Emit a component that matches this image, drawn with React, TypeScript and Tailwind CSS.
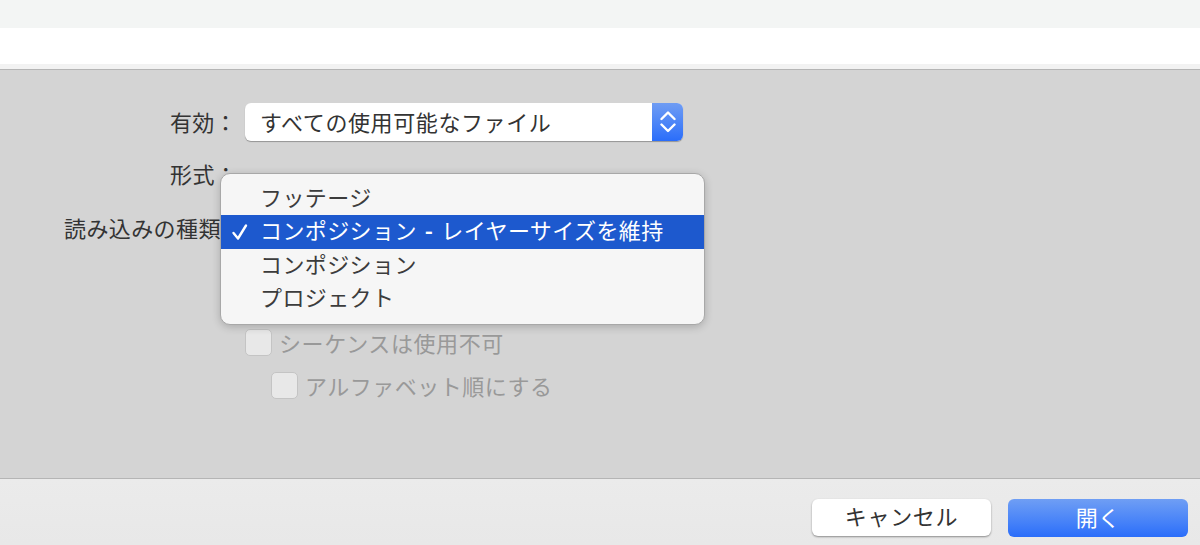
import React from "react";

const font = { fontFamily: '"Noto Sans CJK JP", sans-serif' };

function Check() {
  return (
    <div className="h-[27px] w-[27px] shrink-0 rounded-[5px] border border-[#c4c4c4] bg-[#e8e8e8]" />
  );
}

function Chevrons() {
  return (
    <svg width="16" height="26" viewBox="0 0 16 26" fill="none" stroke="white" strokeWidth="2.4" strokeLinecap="round" strokeLinejoin="round">
      <path d="M1.5 10 L8 3.5 L14.5 10" />
      <path d="M1.5 15.5 L8 22 L14.5 15.5" />
    </svg>
  );
}

function MenuItem({ children, selected }: { children: React.ReactNode; selected?: boolean }) {
  return (
    <div className={`relative flex h-[33.5px] items-center pb-[5px] pl-[39px] text-[22px] leading-none tracking-[0.4px] ${selected ? "bg-[#1d59ce] text-white" : "text-[#3c3c3c]"}`}>
      {selected && (
        <svg className="absolute left-[10px] top-[8px]" width="18" height="18" viewBox="0 0 18 18" fill="none" stroke="white" strokeWidth="2.4" strokeLinecap="round" strokeLinejoin="round">
          <path d="M2.5 10 L7 15.5 L15 2.5" />
        </svg>
      )}
      {children}
    </div>
  );
}

export default function App() {
  return (
    <div className="relative flex h-[545px] w-[1200px] flex-col overflow-hidden bg-white" style={font}>
      <div className="h-[28px] shrink-0 bg-[#f3f5f4]" />
      <div className="h-[36px] shrink-0 bg-white" />
      <div className="h-[5px] shrink-0 bg-[#f2f2f2]" />
      <div className="relative flex-1 border-y border-[#b5b5b5] bg-[#d4d4d4]">
        <div className="box-content flex h-[38px] items-center pl-[170px] pt-[33px]">
          <span className="w-[75px] shrink-0 pb-[2px] text-[22px] leading-none tracking-[0.2px] text-[#333]">有効：</span>
          <div className="flex h-[38px] w-[438px] overflow-hidden rounded-[6px] bg-white shadow-[0_1px_1px_rgba(0,0,0,0.3)]">
            <div className="flex flex-1 items-center pb-[3px] pl-[15px] text-[22px] leading-none tracking-[0.6px] text-[#333]">すべての使用可能なファイル</div>
            <div className="flex w-[31px] items-center justify-center bg-gradient-to-b from-[#6f9cf3] to-[#2a6dfa]">
              <Chevrons />
            </div>
          </div>
        </div>
        <div className="pl-[170px] pt-[17px] text-[22px] leading-[30px] tracking-[0.4px] text-[#333]">形式：</div>
        <div className="pl-[64px] pt-[24px] text-[22px] leading-[30px] tracking-[0.4px] text-[#333]">読み込みの種類：</div>
        <div className="flex items-center gap-[7px] pl-[245px] pt-[85px] text-[22px] leading-[30px] tracking-[0.6px] text-[#999999]">
          <Check />
          <span>シーケンスは使用不可</span>
        </div>
        <div className="flex items-center gap-[7px] pl-[271px] pt-[13px] text-[22px] leading-[30px] tracking-[0.5px] text-[#999999]">
          <Check />
          <span>アルファベット順にする</span>
        </div>
        <div className="absolute left-[220px] top-[103px] flex h-[152px] w-[485px] flex-col justify-center overflow-hidden rounded-[10px] border border-[#a8a8a8] bg-[#f6f6f6] pb-[1px] shadow-[0_2px_8px_rgba(0,0,0,0.2)]">
          <MenuItem>フッテージ</MenuItem>
          <MenuItem selected>
            コンポジション<span className="mx-[8px] font-bold">-</span>レイヤーサイズを維持
          </MenuItem>
          <MenuItem>コンポジション</MenuItem>
          <MenuItem>プロジェクト</MenuItem>
        </div>
      </div>
      <div className="flex h-[66px] shrink-0 items-start justify-end gap-[17px] bg-gradient-to-b from-[#ebebeb] to-[#e8e8e8] pr-[12px] pt-[20px]">
        <button className="flex h-[37px] w-[179px] items-center justify-center rounded-[6px] bg-white pb-[5px] text-[22px] leading-none tracking-[0.7px] text-[#333] shadow-[0_1px_2px_rgba(0,0,0,0.4)]">キャンセル</button>
        <button className="flex h-[38px] w-[180px] items-center justify-center rounded-[6px] bg-gradient-to-b from-[#6f9ef4] to-[#2a6dfa] pb-[5px] text-[22px] leading-none tracking-[0.3px] text-white">開く</button>
      </div>
    </div>
  );
}
